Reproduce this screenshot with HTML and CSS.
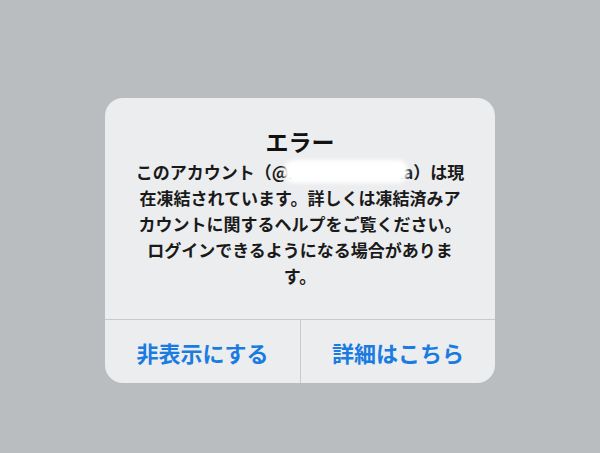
FILE: index.html
```html
<!DOCTYPE html>
<html lang="ja">
<head>
<meta charset="utf-8">
<link rel="stylesheet" href="styles.css">
</head>
<body>
<div class="screen">
  <div class="alert">
    <div class="content">
      <div class="title">エラー</div>
      <div class="message">
        <span class="line">このアカウント（@xxxxxxxxxxxxa）は現</span>
        <span class="line">在凍結されています。詳しくは凍結済みア</span>
        <span class="line">カウントに関するヘルプをご覧ください。</span>
        <span class="line">ログインできるようになる場合がありま</span>
        <span class="line">す。</span>
        <div class="redact"></div>
      </div>
    </div>
    <div class="actions">
      <div class="btn">非表示にする</div>
      <div class="btn">詳細はこちら</div>
    </div>
  </div>
</div>
</body>
</html>
```
FILE: styles.css
```css
html, body {
  margin: 0;
  padding: 0;
}
body {
  width: 600px;
  height: 453px;
  background: #b9bdc0;
  font-family: "Noto Sans CJK JP", "Noto Sans", sans-serif;
  overflow: hidden;
}
.screen {
  display: flex;
  justify-content: center;
  padding-top: 98px;
}
.alert {
  width: 390px;
  background: #ecedef;
  border-radius: 18px;
  overflow: hidden;
}
.content {
  padding: 29px 0 30px;
  text-align: center;
  color: #111;
}
.title {
  font-size: 23px;
  font-weight: 700;
  line-height: 29px;
  margin-bottom: 3px;
}
.message {
  position: relative;
  font-size: 17px;
  font-weight: 700;
  line-height: 26px;
  color: #1a1a1a;
}
.line {
  display: block;
  white-space: nowrap;
}
.redact {
  position: absolute;
  left: 179px;
  top: 1px;
  width: 124px;
  height: 23px;
  background: #ffffff;
  border-radius: 10px;
  filter: blur(2px);
}
.actions {
  display: grid;
  grid-template-columns: 1fr 1fr;
  border-top: 1px solid #c9cacd;
}
.btn {
  height: 63px;
  display: flex;
  align-items: center;
  justify-content: center;
  color: #1a7be0;
  font-size: 22px;
  font-weight: 700;
}
.btn + .btn {
  border-left: 1px solid #c9cacd;
}
```
